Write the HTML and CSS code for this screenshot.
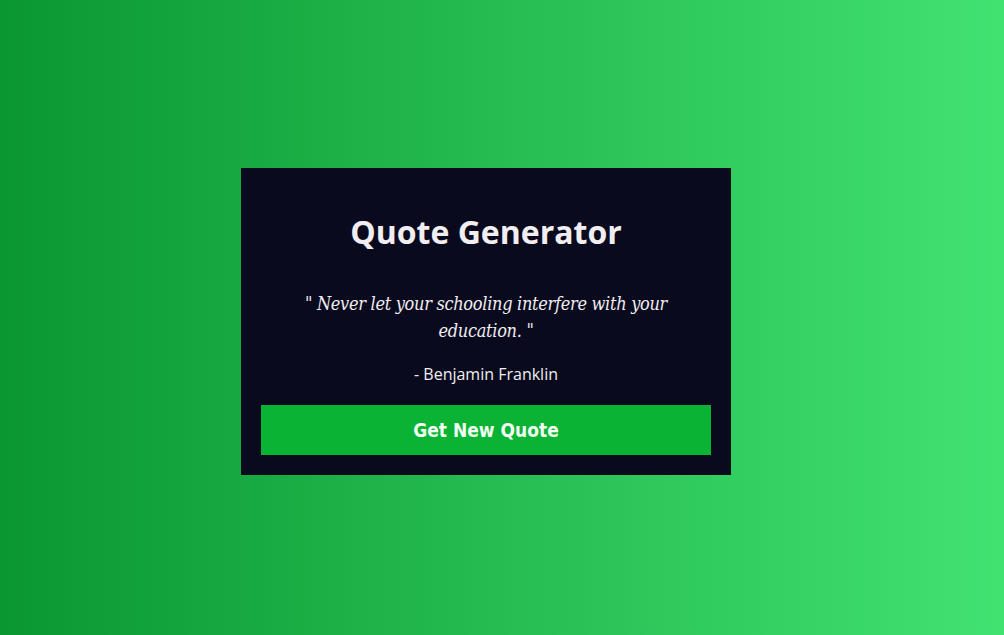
FILE: index.html
```html
<!DOCTYPE html>
<html>
<head>
<meta charset="utf-8">
<link rel="stylesheet" href="styles.css">
</head>
<body>
<main class="page">
  <section class="card">
    <h1 class="title">Quote Generator</h1>
    <p class="quote">" Never let your schooling interfere with your education. "</p>
    <p class="author">- Benjamin Franklin</p>
    <button class="btn">Get New Quote</button>
  </section>
</main>
</body>
</html>
```
FILE: styles.css
```css
* { box-sizing: border-box; }
html, body { margin: 0; height: 100%; }
body {
  background: linear-gradient(to right, #0a9732, #42e271);
  font-family: "Open Sans", sans-serif;
}
.page {
  height: 100%;
  display: flex;
  align-items: center;
  justify-content: center;
}
.card {
  width: 490px;
  background: #0a0a1f;
  padding: 20px;
  text-align: center;
  color: #f0eef0;
  margin: 8px 32px 0 0;
}
.title {
  margin: 22px 0 0;
  font-size: 32px;
  font-weight: 700;
  line-height: 44px;
}
.quote {
  margin: 36px auto 0;
  max-width: 400px;
  font-family: "DejaVu Serif", serif;
  font-stretch: condensed;
  font-style: italic;
  font-size: 18px;
  letter-spacing: -0.3px;
  line-height: 27px;
}
.author {
  margin: 18px 0 0;
  font-size: 16px;
  line-height: 24px;
}
.btn {
  display: block;
  margin-top: 19px;
  width: 100%;
  height: 50px;
  border: none;
  background: #0bb334;
  color: #f2fff4;
  font-family: "DejaVu Sans", sans-serif;
  font-stretch: condensed;
  font-weight: 700;
  font-size: 19px;
}
```
